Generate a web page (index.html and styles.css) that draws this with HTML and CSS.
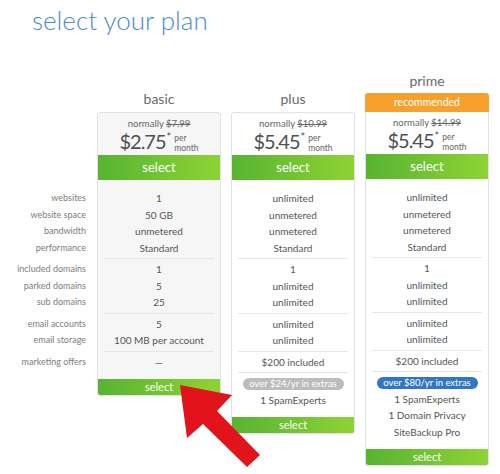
FILE: index.html
```html
<!DOCTYPE html>
<html lang="en">
<head>
    <meta charset="UTF-8">
    <meta name="viewport" content="width=device-width, initial-scale=1.0">
    <title>Select your plan</title>
    <link rel="stylesheet" href="styles.css">
</head>
<body>
    <h1 class="title">select your plan</h1>

    <div class="plans">
        <div class="labels">
            <div class="group first">
                <div class="row">websites</div>
                <div class="row">website space</div>
                <div class="row">bandwidth</div>
                <div class="row">performance</div>
            </div>
            <div class="group">
                <div class="row">included domains</div>
                <div class="row">parked domains</div>
                <div class="row">sub domains</div>
            </div>
            <div class="group">
                <div class="row">email accounts</div>
                <div class="row">email storage</div>
            </div>
            <div class="group">
                <div class="row">marketing offers</div>
            </div>
        </div>

        <div class="plan">
            <div class="plan-head">
                <div class="plan-name">basic</div>
            </div>
            <div class="plan-box basic">
                <div class="price-block">
                    <div class="normally">normally <s>$7.99</s></div>
                    <div class="price"><span class="amount">$2.75</span><span class="star">*</span><span class="per"><span>per</span><span>month</span></span></div>
                </div>
                <div class="select-top">select</div>
                <div class="group first">
                    <div class="row">1</div>
                    <div class="row">50 GB</div>
                    <div class="row">unmetered</div>
                    <div class="row">Standard</div>
                </div>
                <div class="group">
                    <div class="row">1</div>
                    <div class="row">5</div>
                    <div class="row">25</div>
                </div>
                <div class="group">
                    <div class="row">5</div>
                    <div class="row">100 MB per account</div>
                </div>
                <div class="group last">
                    <div class="row">&mdash;</div>
                </div>
                <div class="select-bottom">select</div>
            </div>
        </div>

        <div class="plan">
            <div class="plan-head">
                <div class="plan-name">plus</div>
            </div>
            <div class="plan-box">
                <div class="price-block">
                    <div class="normally">normally <s>$10.99</s></div>
                    <div class="price"><span class="amount">$5.45</span><span class="star">*</span><span class="per"><span>per</span><span>month</span></span></div>
                </div>
                <div class="select-top">select</div>
                <div class="group first">
                    <div class="row">unlimited</div>
                    <div class="row">unmetered</div>
                    <div class="row">unmetered</div>
                    <div class="row">Standard</div>
                </div>
                <div class="group">
                    <div class="row">1</div>
                    <div class="row">unlimited</div>
                    <div class="row">unlimited</div>
                </div>
                <div class="group">
                    <div class="row">unlimited</div>
                    <div class="row">unlimited</div>
                </div>
                <div class="group">
                    <div class="row">$200 included</div>
                </div>
                <div class="group last">
                    <div class="row"><span class="pill grey">over $24/yr in extras</span></div>
                    <div class="row">1 SpamExperts</div>
                </div>
                <div class="select-bottom">select</div>
            </div>
        </div>

        <div class="plan">
            <div class="plan-head">
                <div class="plan-name prime">prime</div>
                <div class="badge">recommended</div>
            </div>
            <div class="plan-box flat-top">
                <div class="price-block">
                    <div class="normally">normally <s>$14.99</s></div>
                    <div class="price"><span class="amount">$5.45</span><span class="star">*</span><span class="per"><span>per</span><span>month</span></span></div>
                </div>
                <div class="select-top">select</div>
                <div class="group first">
                    <div class="row">unlimited</div>
                    <div class="row">unmetered</div>
                    <div class="row">unmetered</div>
                    <div class="row">Standard</div>
                </div>
                <div class="group">
                    <div class="row">1</div>
                    <div class="row">unlimited</div>
                    <div class="row">unlimited</div>
                </div>
                <div class="group">
                    <div class="row">unlimited</div>
                    <div class="row">unlimited</div>
                </div>
                <div class="group">
                    <div class="row">$200 included</div>
                </div>
                <div class="group last">
                    <div class="row"><span class="pill blue">over $80/yr in extras</span></div>
                    <div class="row">1 SpamExperts</div>
                    <div class="row">1 Domain Privacy</div>
                    <div class="row">SiteBackup Pro</div>
                </div>
                <div class="select-bottom">select</div>
            </div>
        </div>
    </div>

    <svg class="arrow" viewBox="0 0 500 474" width="500" height="474">
        <polygon points="180,385 232,395 217,411 260,455 247,467 203,424 187,438" fill="#e2131b"/>
    </svg>
</body>
</html>
```

FILE: styles.css
```css
body {
    font-family: Lato, "Open Sans", sans-serif;
    margin: 0;
    background-color: #fff;
    color: #555;
    width: 500px;
    height: 474px;
    overflow: hidden;
    position: relative;
}
.title {
    margin: 0;
    padding: 2px 0 0 32px;
    font-size: 26px;
    line-height: 36px;
    font-weight: 300;
    color: #4a88d9;
}
.plans {
    display: flex;
    align-items: flex-start;
}
.labels {
    width: 86px;
    padding-top: 142px;
    text-align: right;
    color: #7d7d7d;
    font-size: 9px;
    margin-right: 11px;
}
.group {
    padding: 2px 0;
    border-bottom: 1px solid #e6e6e6;
    margin: 0 6px;
}
.labels .group {
    margin: 0;
    border-bottom-color: transparent;
}
.group.first {
    padding-top: 10px;
}
.group.last {
    border-bottom: none;
    padding-bottom: 9px;
}
.row {
    height: 16.5px;
    line-height: 16.5px;
    white-space: nowrap;
}
.plan {
    width: 124px;
    margin-right: 10px;
}
.plan-head {
    height: 74px;
    display: flex;
    flex-direction: column;
    justify-content: flex-end;
    text-align: center;
}
.plan-name {
    font-size: 14px;
    line-height: 16px;
    color: #6a6a6a;
    margin-bottom: 5px;
}
.plan-name.prime {
    margin-bottom: 4px;
}
.badge {
    background-color: #f7a02c;
    color: #fff;
    font-size: 10.5px;
    height: 19px;
    line-height: 19px;
    border-radius: 3px 3px 0 0;
}
.plan-box {
    border: 1px solid #e2e2e2;
    border-radius: 3px;
    background-color: #fff;
    text-align: center;
    font-size: 10px;
    color: #555;
    overflow: hidden;
}
.plan-box.basic {
    background-color: #f6f6f6;
}
.plan-box.flat-top {
    border-top: none;
    border-radius: 0 0 3px 3px;
}
.price-block {
    height: 42px;
    padding-top: 1px;
    box-sizing: border-box;
}
.normally {
    font-size: 9.5px;
    line-height: 12px;
    color: #666;
    padding-top: 4px;
}
.price {
    display: flex;
    justify-content: center;
    align-items: flex-start;
    color: #505050;
    line-height: 22px;
}
.amount {
    font-size: 20px;
    letter-spacing: -1px;
}
.star {
    font-size: 11px;
    line-height: 13px;
    margin-left: 1px;
}
.per {
    display: flex;
    flex-direction: column;
    font-size: 8.5px;
    line-height: 10px;
    text-align: left;
    color: #666;
    margin-left: 3px;
    padding-top: 3px;
}
.select-top {
    height: 25px;
    line-height: 25px;
    font-size: 13px;
    color: #fff;
    background: linear-gradient(to right, #57b431, #8ed334);
}
.select-bottom {
    height: 16px;
    line-height: 16px;
    font-size: 11px;
    color: #fff;
    background: linear-gradient(to right, #57b431, #8ed334);
}
.pill {
    display: inline-block;
    width: 101px;
    height: 12px;
    line-height: 12px;
    border-radius: 6px;
    color: #fff;
    font-size: 9.5px;
}
.pill.grey {
    background-color: #bcbcbc;
}
.pill.blue {
    background-color: #3176c6;
}
.arrow {
    position: absolute;
    left: 0;
    top: 0;
    pointer-events: none;
}
```
